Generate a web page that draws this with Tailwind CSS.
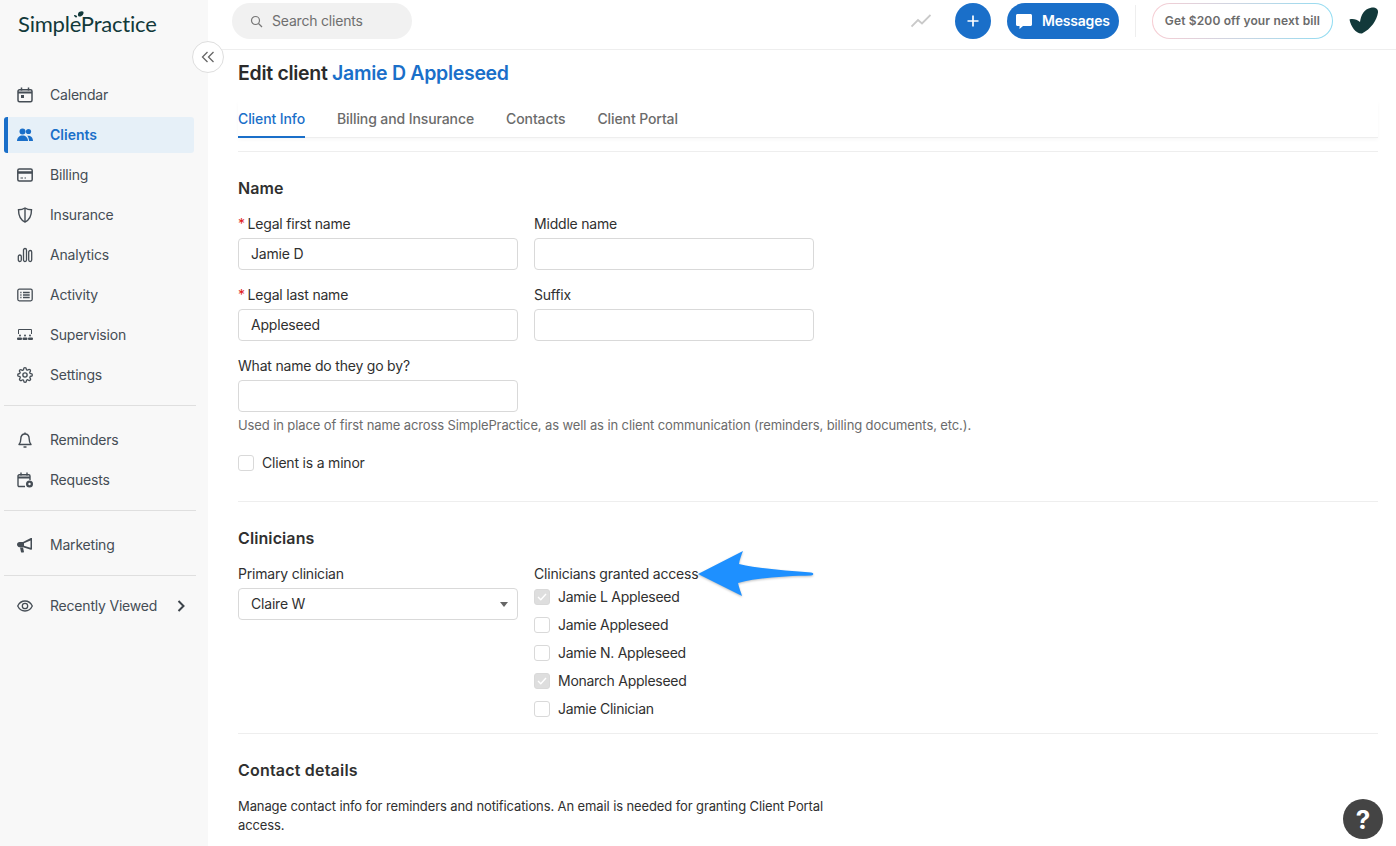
<!DOCTYPE html>
<html lang="en">
<head>
    <meta charset="UTF-8">
    <script src="https://cdn.jsdelivr.net/npm/@tailwindcss/browser@4"></script>
    <title>Edit client</title>
</head>
<body class="font-['Inter',sans-serif] text-[14px] tracking-[-0.2px] text-[#303030] bg-white">
<div class="relative flex h-[846px] w-[1396px] overflow-hidden">

    <!-- Sidebar -->
    <aside class="w-[208px] shrink-0 bg-[#f8f8f8] text-[#454d55]">
        <div class="h-[77px] pl-[18px] pt-[10px]">
            <div class="relative w-[140px] font-['Lato',sans-serif] text-[22px] leading-[28px] tracking-[-0.2px] text-[#12393a]">SimplePractice
                <svg class="absolute left-[53px] top-[1px]" width="14" height="10" viewBox="0 0 14 10" fill="#12393a"><path d="M8 1c2-1 4-1 4.500 0 .3 2-1 4.500-4 4.500C6.500 5.500 6.500 3 8 1z"/><path d="M3 4c1.500-.3 3 .5 3.200 2-1 .8-3 .5-3.200-2z"/></svg>
            </div>
        </div>
        <nav class="pl-1 w-[194px] flex flex-col gap-1">
            <a class="flex items-center h-9 pl-[13px] gap-[17px]">
                <svg width="16" height="16" viewBox="0 0 16 16" fill="none" stroke="#454d55" stroke-width="1.500"><rect x="1" y="2.800" width="14" height="12" rx="1.500"/><path d="M1 5.500h14" stroke-width="2"/><path d="M4.500 .5v3M11.500 .5v3"/><rect x="4" y="8" width="3" height="3" fill="#454d55" stroke="none"/></svg>
                <span class="-mt-[2px]">Calendar</span>
            </a>
            <a class="flex items-center h-9 pl-[9px] gap-[17px] border-l-4 border-[#1a6fc9] rounded-[3px] bg-[#e6f0f8] text-[#1a6fc9] font-semibold">
                <svg width="16" height="14" viewBox="0 0 16 14" fill="#1a6fc9"><circle cx="5.500" cy="3.500" r="3"/><circle cx="11.500" cy="3.500" r="2.600"/><path d="M0 13c0-3.500 2.500-5.500 5.500-5.500S11 9.500 11 13z"/><path d="M12 13c0-2-.6-3.800-1.800-5.200 2.800-.6 5.800 1.200 5.800 5.200z"/></svg>
                <span class="-mt-[2px] tracking-normal">Clients</span>
            </a>
            <a class="flex items-center h-9 pl-[13px] gap-[17px]">
                <svg width="16" height="14" viewBox="0 0 16 14" fill="none" stroke="#454d55" stroke-width="1.500"><rect x=".8" y="1" width="14.400" height="12" rx="1.500"/><path d="M1 4.500h14" stroke-width="2.500"/><path d="M3.500 10h2.500M7.500 10h1.500" stroke-width="1.200"/></svg>
                <span class="-mt-[2px]">Billing</span>
            </a>
            <a class="flex items-center h-9 pl-[13px] gap-[17px]">
                <svg width="16" height="16" viewBox="0 0 16 16" fill="none" stroke="#454d55" stroke-width="1.400"><path d="M8 1c2 1.300 4.300 1.800 6.500 1.800 0 5.500-1.500 10-6.500 12.200C3 12.800 1.500 8.300 1.500 2.800 3.700 2.800 6 2.300 8 1z"/><path d="M8 1v14"/></svg>
                <span class="-mt-[2px]">Insurance</span>
            </a>
            <a class="flex items-center h-9 pl-[13px] gap-[17px]">
                <svg width="16" height="16" viewBox="0 0 16 16" fill="none" stroke="#454d55" stroke-width="1.300"><rect x="1.300" y="8" width="3" height="6.500" rx="1.500"/><rect x="6.500" y="1.500" width="3" height="13" rx="1.500"/><rect x="11.700" y="3.500" width="3" height="11" rx="1.500"/></svg>
                <span class="-mt-[2px]">Analytics</span>
            </a>
            <a class="flex items-center h-9 pl-[13px] gap-[17px]">
                <svg width="16" height="14" viewBox="0 0 16 14" fill="none" stroke="#454d55" stroke-width="1.300"><rect x=".8" y="1.200" width="14.400" height="11.600" rx="1.500"/><path d="M3.300 4.500h1.200M3.300 7h1.200M3.300 9.500h1.200M6 4.500h6.700M6 7h6.700M6 9.500h6.700"/></svg>
                <span class="-mt-[2px]">Activity</span>
            </a>
            <a class="flex items-center h-9 pl-[13px] gap-[17px]">
                <svg width="16" height="14" viewBox="0 0 16 14" fill="#454d55"><path d="M1 6V2.200C1 1.500 1.500 1 2.200 1h11.600c.7 0 1.200.5 1.200 1.200V6h-1V2H2v4z"/><circle cx="3" cy="7.500" r="1"/><circle cx="8" cy="7.500" r="1"/><circle cx="13" cy="7.500" r="1"/><rect x="0" y="9.500" width="5" height="2.500" rx="1"/><rect x="5.500" y="9.500" width="5" height="2.500" rx="1"/><rect x="11" y="9.500" width="5" height="2.500" rx="1"/></svg>
                <span class="-mt-[2px]">Supervision</span>
            </a>
            <a class="flex items-center h-9 pl-[13px] gap-[17px]">
                <svg width="16" height="16" viewBox="0 0 24 24" fill="none" stroke="#454d55" stroke-width="2" stroke-linecap="round" stroke-linejoin="round"><circle cx="12" cy="12" r="3.200"/><path d="M19.400 15a1.650 1.650 0 0 0 .33 1.820l.06.06a2 2 0 1 1-2.830 2.830l-.06-.06a1.650 1.650 0 0 0-2.800 1.170V21a2 2 0 1 1-4 0v-.09A1.650 1.650 0 0 0 7.300 19.700l-.06.06a2 2 0 1 1-2.830-2.830l.06-.06a1.650 1.650 0 0 0-1.170-2.800H3a2 2 0 1 1 0-4h.09A1.650 1.650 0 0 0 4.300 7.300l-.06-.06a2 2 0 1 1 2.830-2.830l.06.06a1.650 1.650 0 0 0 2.800-1.170V3a2 2 0 1 1 4 0v.09a1.650 1.650 0 0 0 2.800 1.170l.06-.06a2 2 0 1 1 2.830 2.830l-.06.06a1.650 1.650 0 0 0 1.170 2.800H21a2 2 0 1 1 0 4h-.09a1.650 1.650 0 0 0-1.510 1.110z"/></svg>
                <span class="-mt-[2px]">Settings</span>
            </a>
        </nav>
        <div class="ml-1 w-[192px] mt-3 border-t border-[#dfdfdf]"></div>
        <nav class="pl-1 w-[194px] mt-4 flex flex-col gap-1">
            <a class="flex items-center h-9 pl-[13px] gap-[17px]">
                <svg width="16" height="16" viewBox="0 0 16 16" fill="none" stroke="#454d55" stroke-width="1.400" stroke-linejoin="round"><path d="M2 12.500c1.200-1.300 1.800-2 1.800-5.500C3.800 4 5.500 2 8 2s4.200 2 4.200 5c0 3.500.6 4.200 1.800 5.500z"/><path d="M7 15h2" stroke-linecap="round"/><path d="M8 .5V2"/></svg>
                <span class="-mt-[2px]">Reminders</span>
            </a>
            <a class="flex items-center h-9 pl-[13px] gap-[17px]">
                <svg width="16" height="16" viewBox="0 0 16 16" fill="none" stroke="#454d55" stroke-width="1.400"><path d="M8 14.500H2.200c-.7 0-1.200-.5-1.200-1.200V4c0-.7.500-1.200 1.200-1.200h9.600c.7 0 1.200.5 1.200 1.200v4"/><path d="M1 5.500h12" stroke-width="2"/><path d="M4 .5v3M10 .5v3"/><circle cx="12.500" cy="12" r="3.500" fill="#454d55" stroke="none"/><circle cx="12.500" cy="12" r="1.200" fill="#f8f8f8" stroke="none"/></svg>
                <span class="-mt-[2px]">Requests</span>
            </a>
        </nav>
        <div class="ml-1 w-[192px] mt-3 border-t border-[#dfdfdf]"></div>
        <nav class="pl-1 w-[194px] mt-4">
            <a class="flex items-center h-9 pl-[13px] gap-[17px]">
                <svg width="16" height="16" viewBox="0 0 16 16" fill="#454d55"><path d="M15 1v11.500l-1.200.2L6 10.200H2.500C1.100 10.200 0 9 0 7.600S1.100 5 2.500 5H6l7.800-4zM13.500 3.500 7 6.300v2.500l6.500 2z"/><path d="M3 10.500h3l1 4.300c0 .3-.3.700-.7.700H4.800c-.4 0-.7-.2-.8-.6z"/></svg>
                <span class="-mt-[2px]">Marketing</span>
            </a>
        </nav>
        <div class="ml-1 w-[192px] mt-3 border-t border-[#dfdfdf]"></div>
        <nav class="pl-1 w-[194px] mt-3">
            <a class="flex items-center h-9 pl-[13px] gap-[17px]">
                <svg width="16" height="12" viewBox="0 0 16 12" fill="none" stroke="#454d55" stroke-width="1.300"><path d="M.7 6C2.300 2.700 4.900 1 8 1s5.700 1.700 7.300 5c-1.600 3.300-4.200 5-7.300 5S2.300 9.300.7 6z"/><circle cx="8" cy="6" r="2.700"/></svg>
                <span class="-mt-[2px]">Recently Viewed</span>
                <svg class="ml-[3px]" width="8" height="12" viewBox="0 0 8 12" fill="none" stroke="#3c434a" stroke-width="2"><path d="M1.500 1l5 5-5 5"/></svg>
            </a>
        </nav>
    </aside>

    <!-- Collapse toggle -->
    <button class="absolute left-[192px] top-[41px] z-10 flex h-8 w-8 items-center justify-center rounded-full border border-[#dedede] bg-white">
        <svg width="14" height="12" viewBox="0 0 14 12" fill="none" stroke="#666" stroke-width="1.300"><path d="M6.500 1 1.500 6l5 5M12.500 1l-5 5 5 5"/></svg>
    </button>

    <div class="flex-1 min-w-0">
        <!-- Top bar -->
        <header class="flex h-[50px] items-start border-b border-[#eeeeee] pt-[3px] pl-6 pr-[17px]">
            <div class="flex h-9 w-[180px] items-center gap-[9px] rounded-full bg-[#f1f1f1] pl-[18px] text-[#6f6f6f]">
                <svg width="13" height="13" viewBox="0 0 13 13" fill="none" stroke="#777" stroke-width="1.200"><circle cx="5.500" cy="5.500" r="4"/><path d="M8.500 8.500 12 12"/></svg>
                <span class="-mt-[2px]">Search clients</span>
            </div>
            <svg class="ml-auto mt-[11px]" width="20" height="14" viewBox="0 0 20 14" fill="none" stroke="#c9c9c9" stroke-width="1.800"><path d="M.5 12.500 7 6l4 3.500L19.500 1"/></svg>
            <button class="ml-6 flex h-9 w-9 items-center justify-center rounded-full bg-[#1a6fc9]">
                <svg width="12" height="12" viewBox="0 0 12 12" stroke="white" stroke-width="1.700"><path d="M6 .5v11M.5 6h11"/></svg>
            </button>
            <button class="ml-4 flex h-9 w-[112px] items-center gap-[10px] rounded-full bg-[#1a6fc9] pl-[9px] font-semibold text-white">
                <svg width="16" height="15" viewBox="0 0 16 15" fill="white"><path d="M1.500 0h13C15.300 0 16 .7 16 1.500v9c0 .8-.7 1.500-1.500 1.500H7l-3.500 3v-3h-2C.7 12 0 11.300 0 10.500v-9C0 .7.700 0 1.500 0z"/></svg>
                <span class="-mt-[2px]">Messages</span>
            </button>
            <div class="ml-4 mt-[2px] h-8 w-px bg-[#eeeeee]"></div>
            <div class="ml-4 h-9 w-[181px] rounded-full bg-linear-to-r from-[#f7cdd3] to-[#8fdcf2] p-px">
                <div class="flex h-full items-center justify-center rounded-full bg-white text-[12px] font-semibold tracking-[0.15px] text-[#6b6b6b]">Get $200 off your next bill</div>
            </div>
            <svg class="ml-4 mt-[4px]" width="30" height="28" viewBox="0 0 30 28" fill="#12393a"><path d="M.5 12.500C4 11.500 8 12.500 11 15 12 8 15 2 22 .8c4-.8 7.500 1.200 7 4.700C28 13 22 22 13 26.500 7 27 2 20 .5 12.500z"/></svg>
        </header>

        <!-- Main -->
        <main class="pl-[30px] pr-[18px]">
            <h1 class="mt-[9px] text-[19.5px] leading-7 font-semibold tracking-[-0.3px] text-[#2b2b2b]">Edit client <span class="text-[#1a6fc9]">Jamie D Appleseed</span></h1>

            <div class="mt-[14px] flex h-[37px] gap-8 border-b border-[#eeeeee] font-medium tracking-[-0.1px] text-[#6b6b6b] shadow-[0_2px_4px_rgba(0,0,0,0.03)]">
                <a class="h-[37px] border-b-2 border-[#1a6fc9] pt-[7px] text-[#1a6fc9]">Client Info</a>
                <a class="pt-[7px]">Billing and Insurance</a>
                <a class="pt-[7px]">Contacts</a>
                <a class="pt-[7px]">Client Portal</a>
            </div>
            <div class="mt-[13px] border-t border-[#eeeeee]"></div>

            <h2 class="mt-6 text-[16px] leading-6 font-semibold tracking-[0.1px]">Name</h2>

            <div class="mt-[14px] grid w-[576px] grid-cols-2 gap-x-4 gap-y-[15px]">
                <div>
                    <label class="block h-6 leading-5"><span class="-mr-px text-[#e0201b]">*</span> Legal first name</label>
                    <div class="flex h-8 items-center rounded-[4px] border border-[#d9d9d9] px-3"><span class="-mt-[2px]">Jamie D</span></div>
                </div>
                <div>
                    <label class="block h-6 leading-5">Middle name</label>
                    <div class="h-8 rounded-[4px] border border-[#d9d9d9]"></div>
                </div>
                <div>
                    <label class="block h-6 leading-5"><span class="-mr-px text-[#e0201b]">*</span> Legal last name</label>
                    <div class="flex h-8 items-center rounded-[4px] border border-[#d9d9d9] px-3"><span class="-mt-[2px]">Appleseed</span></div>
                </div>
                <div>
                    <label class="block h-6 leading-5">Suffix</label>
                    <div class="h-8 rounded-[4px] border border-[#d9d9d9]"></div>
                </div>
                <div>
                    <label class="block h-6 leading-5">What name do they go by?</label>
                    <div class="h-8 rounded-[4px] border border-[#d9d9d9]"></div>
                </div>
            </div>
            <p class="mt-[3px] text-[13px] leading-5 tracking-[-0.11px] text-[#6b6b6b]">Used in place of first name across SimplePractice, as well as in client communication (reminders, billing documents, etc.).</p>

            <div class="mt-[18px] flex h-5 items-center gap-2">
                <span class="h-4 w-4 rounded-[3px] border border-[#d9d9d9]"></span>
                <span class="-mt-[2px]">Client is a minor</span>
            </div>

            <div class="mt-[28px] border-t border-[#eeeeee]"></div>

            <h2 class="mt-6 text-[16px] leading-6 font-semibold tracking-[0.1px]">Clinicians</h2>

            <div class="mt-[14px] grid w-[576px] grid-cols-2 gap-x-4">
                <div>
                    <label class="block h-6 leading-5">Primary clinician</label>
                    <div class="flex h-8 items-center justify-between rounded-[4px] border border-[#d9d9d9] pl-3 pr-[9px]">
                        <span class="-mt-[2px]">Claire W</span>
                        <span class="h-0 w-0 border-x-[4px] border-t-[5px] border-x-transparent border-t-[#666]"></span>
                    </div>
                </div>
                <div>
                    <label class="block h-[19px] leading-5">Clinicians granted access</label>
                    <ul class="tracking-[-0.27px]">
                        <li class="flex h-7 items-center gap-2">
                            <span class="flex h-4 w-4 items-center justify-center rounded-[3px] border border-[#d9d9d9] bg-[#dedede]"><svg width="10" height="8" viewBox="0 0 10 8" fill="none" stroke="white" stroke-width="1.400"><path d="M1 4l2.800 2.800L9 1"/></svg></span>
                            <span class="-mt-[2px]">Jamie L Appleseed</span>
                        </li>
                        <li class="flex h-7 items-center gap-2"><span class="h-4 w-4 rounded-[3px] border border-[#d9d9d9]"></span><span class="-mt-[2px]">Jamie Appleseed</span></li>
                        <li class="flex h-7 items-center gap-2"><span class="h-4 w-4 rounded-[3px] border border-[#d9d9d9]"></span><span class="-mt-[2px]">Jamie N. Appleseed</span></li>
                        <li class="flex h-7 items-center gap-2">
                            <span class="flex h-4 w-4 items-center justify-center rounded-[3px] border border-[#d9d9d9] bg-[#dedede]"><svg width="10" height="8" viewBox="0 0 10 8" fill="none" stroke="white" stroke-width="1.400"><path d="M1 4l2.800 2.800L9 1"/></svg></span>
                            <span class="-mt-[2px]">Monarch Appleseed</span>
                        </li>
                        <li class="flex h-7 items-center gap-2"><span class="h-4 w-4 rounded-[3px] border border-[#d9d9d9]"></span><span class="-mt-[2px]">Jamie Clinician</span></li>
                    </ul>
                </div>
            </div>

            <div class="mt-[10px] border-t border-[#eeeeee]"></div>

            <h2 class="mt-6 text-[16px] leading-6 font-semibold tracking-[0.2px]">Contact details</h2>
            <p class="mt-[15px] w-[600px] text-[13px] leading-[19px] tracking-[-0.11px]">Manage contact info for reminders and notifications. An email is needed for granting Client Portal access.</p>
        </main>
    </div>

    <!-- Annotation arrow -->
    <svg class="absolute left-[695px] top-[548px]" width="122" height="52" viewBox="0 0 122 52">
        <path d="M3 26 48 3C46 8 44.500 12 44 16 65 21 95 22.500 116 24.500c3 .5 3 2.500 0 3C95 28 65 29 43 35c1 5 3 9 4 13z" fill="#1e90ff" style="filter:drop-shadow(0 1px 1px rgba(0,0,0,.25))"/>
    </svg>

    <!-- Help -->
    <button class="absolute left-[1343px] top-[799px] flex h-10 w-10 items-center justify-center rounded-full bg-[#444444] text-[26px] font-bold text-white">?</button>
</div>
</body>
</html>
